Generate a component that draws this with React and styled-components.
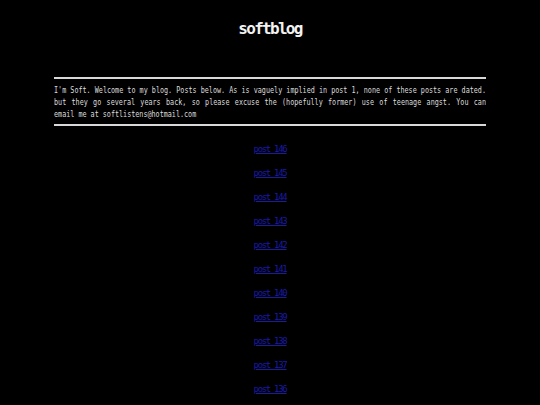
import React from 'react'
import styled, { createGlobalStyle } from 'styled-components'

const GlobalStyle = createGlobalStyle`
  html, body {
    margin: 0;
    padding: 0;
    background: #000;
    overflow-x: hidden;
  }
  body {
    font-family: "DejaVu Sans Mono", "Liberation Mono", monospace;
    color: #e6e6e6;
  }
`

const posts = [146, 145, 144, 143, 142, 141, 140, 139, 138, 137, 136]

const Page = styled.div`
  width: 432px;
  margin: 0 auto;
  padding-top: 18px;
`

const Title = styled.h1`
  margin: 0 0 37px;
  height: 22px;
  line-height: 22px;
  text-align: center;
  font-size: 16px;
  font-weight: bold;
  letter-spacing: -1.7px;
  color: #f2f2f2;
`

const Rule = styled.hr`
  margin: 0;
  border: 0;
  height: 2px;
  background: #d8d8d8;
`

/* narrow mono: the text box is laid out wide, then squeezed to the column */
const IntroBox = styled.div`
  height: 45px;
  padding-top: 5px;
  box-sizing: border-box;
`

const Intro = styled.p`
  margin: 0;
  width: 576px;
  transform: scaleX(0.75);
  transform-origin: left top;
  font-size: 9px;
  line-height: 12px;
  text-align: justify;
  color: #dcdcdc;
`

const Header = styled.header`
  display: flex;
  flex-direction: column;
`

const PostList = styled.nav`
  display: flex;
  flex-direction: column;
  align-items: center;
  padding-top: 17px;
  gap: 12px;
`

const PostLink = styled.a`
  display: inline-block;
  font-size: 9px;
  line-height: 12px;
  letter-spacing: -1.3px;
  color: #1a1aa8;
  text-decoration: underline;
`

export default function App() {
  return (
    <>
      <GlobalStyle />
      <Page>
        <Header>
          <Title>softblog</Title>
          <Rule />
          <IntroBox>
            <Intro>
              I'm Soft. Welcome to my blog. Posts below. As is vaguely implied in post 1, none of these posts are dated.
              but they go several years back, so please excuse the (hopefully former) use of teenage angst. You can
              email me at softlistens@hotmail.com
            </Intro>
          </IntroBox>
          <Rule />
        </Header>
        <PostList>
          {posts.map((n) => (
            <PostLink key={n} href={`#post-${n}`}>post {n}</PostLink>
          ))}
        </PostList>
      </Page>
    </>
  )
}
